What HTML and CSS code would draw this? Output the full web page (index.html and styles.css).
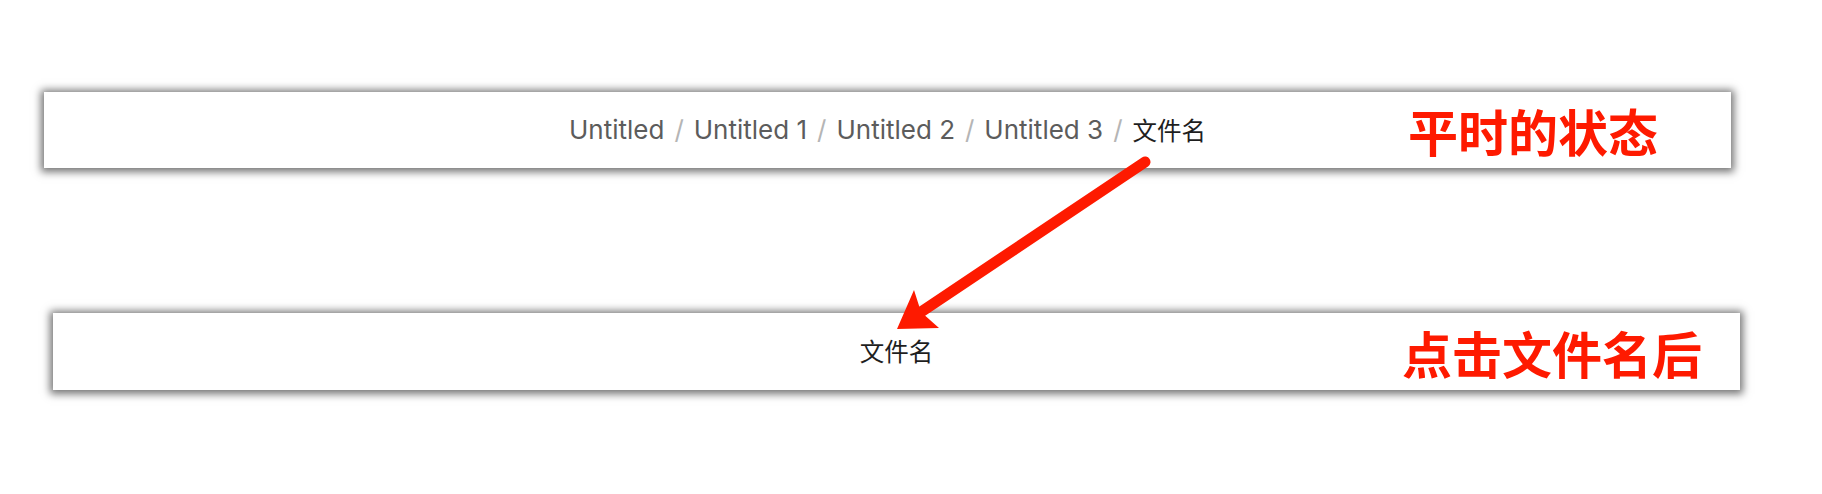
FILE: index.html
```html
<!DOCTYPE html>
<html lang="zh-CN">
<head>
  <meta charset="UTF-8" />
  <meta name="viewport" content="width=device-width, initial-scale=1.0" />
  <title>Breadcrumb states</title>
  <link rel="stylesheet" href="styles.css">
</head>
<body>
  <div class="page">
    <div class="bar bar-normal">
      <nav class="crumbs">
        <span class="crumb">Untitled</span>
        <span class="sep">/</span>
        <span class="crumb">Untitled 1</span>
        <span class="sep">/</span>
        <span class="crumb">Untitled 2</span>
        <span class="sep">/</span>
        <span class="crumb">Untitled 3</span>
        <span class="sep">/</span>
        <span class="crumb current">文件名</span>
      </nav>
      <div class="note">平时的状态</div>
    </div>

    <div class="bar bar-clicked">
      <nav class="crumbs">
        <span class="crumb current">文件名</span>
      </nav>
      <div class="note">点击文件名后</div>
    </div>
  </div>

  <svg class="arrow" width="1822" height="494" viewBox="0 0 1822 494">
    <line x1="1145" y1="162" x2="921" y2="312" stroke="#fe1a00" stroke-width="11" stroke-linecap="round" />
    <polygon points="897,329 914,290 921,312 939,328" fill="#fe1a00" />
  </svg>
</body>
</html>
```

FILE: styles.css
```css
*{
  padding: 0;
  margin: 0;
  box-sizing: border-box;
}
html, body{
  height: 100%;
}
body{
  background-color: #fff;
  font-family: Inter, "Noto Sans CJK SC", sans-serif;
}
.page{
  display: flex;
  flex-direction: column;
  min-height: 494px;
  padding-top: 92px;
  gap: 145px;
}
.bar{
  display: grid;
  grid-template-columns: 1fr auto 1fr;
  align-items: center;
  width: 1687px;
  background-color: #fff;
  box-shadow: 0 1px 8px 3px rgba(0, 0, 0, 0.55);
}
.bar-normal{
  margin-left: 44px;
  height: 76px;
}
.bar-clicked{
  margin-left: 53px;
  height: 77px;
}
.crumbs{
  grid-column: 2;
  display: flex;
  align-items: center;
  font-size: 26px;
  line-height: 1;
}
.crumb{
  color: #5c5c5c;
}
.crumb.current{
  color: #1e1e1e;
  font-family: "Noto Sans CJK SC", sans-serif;
  font-size: 24.5px;
}
.sep{
  color: #b5b5b5;
  margin: 0 10px;
}
.note{
  grid-column: 3;
  justify-self: end;
  color: #fe1a00;
  font-family: "Noto Sans CJK SC", sans-serif;
  font-weight: 700;
  font-size: 50px;
  line-height: 1;
}
.bar-normal .note{
  margin-right: 73px;
}
.bar-clicked .note{
  margin-right: 38px;
}
.arrow{
  position: absolute;
  top: 0;
  left: 0;
  pointer-events: none;
}
```
